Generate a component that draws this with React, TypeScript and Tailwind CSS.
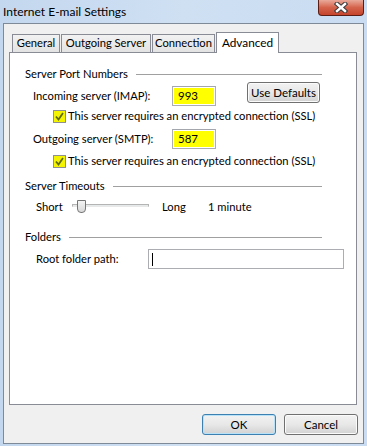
import React from 'react';

const font = { fontFamily: 'Lato, "Noto Sans", sans-serif' };

function CloseButton() {
  return (
    <div className="flex h-[16px] w-[46px] items-center justify-center rounded-b-[4px] border border-t-0 border-[#5b1d14] bg-gradient-to-b from-[#e9a99a] via-[#d4634c] to-[#c5432b]">
      <svg width="14" height="11" viewBox="0 0 14 11">
        <path d="M3 2 L11 9 M11 2 L3 9" stroke="#3b3b3b" strokeWidth="4.5" strokeLinecap="square" />
        <path d="M3 2 L11 9 M11 2 L3 9" stroke="#ffffff" strokeWidth="2.4" strokeLinecap="square" />
      </svg>
    </div>
  );
}

function Tab({ label, width, active }: { label: string; width: string; active?: boolean }) {
  if (active) {
    return (
      <div className={`relative z-10 -mb-[1px] flex h-[21px] items-center justify-center whitespace-nowrap border border-b-0 border-[#898c95] bg-white text-[11.8px] text-black ${width}`}>
        {label}
      </div>
    );
  }
  return (
    <div className={`mr-[1px] mt-[2px] flex h-[18px] items-center justify-center whitespace-nowrap border border-b-0 border-[#898c95] bg-gradient-to-b from-[#f2f2f2] to-[#e3e3e3] text-[11.2px] text-black ${width}`}>
      {label}
    </div>
  );
}

function GroupHeader({ title }: { title: string }) {
  return (
    <div className="flex h-[16px] w-[297px] items-center">
      <span className="whitespace-nowrap text-[11.2px] leading-none text-black">{title}</span>
      <div className="ml-[8px] h-px flex-1 bg-[#a0a0a0]" />
    </div>
  );
}

function Checkbox() {
  return (
    <div className="flex h-[13px] w-[13px] shrink-0 items-center justify-center border border-[#8e8f8f] bg-[#f4f400]">
      <svg width="9" height="9" viewBox="0 0 9 9">
        <path d="M1 4.5 L3.5 7.5 L8 1" fill="none" stroke="#5d6a1c" strokeWidth="1.8" />
      </svg>
    </div>
  );
}

function PortInput({ value }: { value: string }) {
  return (
    <div className="flex h-[20px] w-[44px] shrink-0 items-center border border-[#abadb3] border-t-[#a3a6ad] bg-white p-px">
      <div className="flex h-full w-full items-center bg-[#ffff00] pl-[4px] text-[11.5px] text-black">{value}</div>
    </div>
  );
}

function PushButton({ label, width, isDefault }: { label: string; width: string; isDefault?: boolean }) {
  return (
    <div
      className={`flex h-[21px] items-center justify-center whitespace-nowrap rounded-[3px] border bg-gradient-to-b from-[#f2f2f2] via-[#e8e8e8] to-[#d2d2d2] text-[11.5px] text-black ${width} ${
        isDefault ? 'border-[#3c7fb1] shadow-[inset_0_0_0_1px_#b7e2f7]' : 'border-[#707070] shadow-[inset_0_0_0_1px_#fbfbfb]'
      }`}
    >
      {label}
    </div>
  );
}

export default function App() {
  return (
    <div className="h-[446px] w-[367px] overflow-hidden bg-gradient-to-r from-[#c3d7ee] via-[#cfe0f3] to-[#c9dcf1]" style={font}>
      {/* Title bar */}
      <div className="flex h-[23px] items-start justify-between">
        <div className="whitespace-nowrap pl-[3px] pt-[3px] text-[12px] text-black">Internet E-mail Settings</div>
        <div className="mr-[3px]">
          <CloseButton />
        </div>
      </div>

      {/* Body */}
      <div className="ml-[3px] h-[421px] w-[361px] border border-[#7e8a98] bg-[#f0f0f0]">
        {/* Tabs */}
        <div className="ml-[8px] mt-[8px] flex h-[20px] items-end">
          <Tab label="General" width="w-[48px]" />
          <Tab label="Outgoing Server" width="w-[90px]" />
          <Tab label="Connection" width="w-[63px]" />
          <Tab label="Advanced" width="w-[63px]" active />
        </div>

        {/* Tab panel */}
        <div className="ml-[5px] h-[353px] w-[348px] border border-[#898c95] bg-white pl-[15px] text-[11.2px]">
          <div className="mt-[13px]">
            <GroupHeader title="Server Port Numbers" />
          </div>

          <div className="mt-[4px] flex h-[20px] items-center">
            <div className="w-[147px] shrink-0 whitespace-nowrap pl-[8px] text-black">Incoming server (IMAP):</div>
            <PortInput value="993" />
            <div className="ml-[31px] -mt-[7px]">
              <PushButton label="Use Defaults" width="w-[73px]" />
            </div>
          </div>

          <div className="mt-[3px] flex h-[15px] items-center pl-[28px]">
            <Checkbox />
            <span className="ml-[2px] whitespace-nowrap text-black">This server requires an encrypted connection (SSL)</span>
          </div>

          <div className="mt-[5px] flex h-[20px] items-center">
            <div className="w-[147px] shrink-0 whitespace-nowrap pl-[8px] text-black">Outgoing server (SMTP):</div>
            <PortInput value="587" />
          </div>

          <div className="mt-[5px] flex h-[15px] items-center pl-[28px]">
            <Checkbox />
            <span className="ml-[2px] whitespace-nowrap text-black">This server requires an encrypted connection (SSL)</span>
          </div>

          <div className="mt-[9px]">
            <GroupHeader title="Server Timeouts" />
          </div>

          <div className="mt-[5px] flex h-[16px] items-center pl-[11px] text-black">
            <span className="w-[36px]">Short</span>
            <div className="relative h-[16px] w-[77px]">
              <div className="absolute left-0 right-0 top-[5px] h-[3px] border border-[#b4b4b4] border-b-[#e8e8e8] bg-[#e7eaea]" />
              <div className="absolute left-[5px] top-[1px] h-[13px] w-[9px] rounded-b-[4px] border border-[#767676] bg-gradient-to-b from-[#f4f4f4] to-[#d8d8d8]" />
            </div>
            <span className="ml-[13px] w-[46px]">Long</span>
            <span className="whitespace-nowrap">1 minute</span>
          </div>

          <div className="mt-[14px]">
            <GroupHeader title="Folders" />
          </div>

          <div className="mt-[4px] flex h-[20px] items-center">
            <div className="w-[123px] shrink-0 whitespace-nowrap pl-[11px] text-black">Root folder path:</div>
            <div className="flex h-[20px] w-[196px] items-center border border-[#abadb3] bg-white pl-[3px]">
              <div className="h-[13px] w-px bg-black" />
            </div>
          </div>
        </div>

        {/* Buttons */}
        <div className="mr-[5px] mt-[9px] flex justify-end gap-[8px]">
          <PushButton label="OK" width="w-[74px]" isDefault />
          <PushButton label="Cancel" width="w-[74px]" />
        </div>
      </div>
    </div>
  );
}
